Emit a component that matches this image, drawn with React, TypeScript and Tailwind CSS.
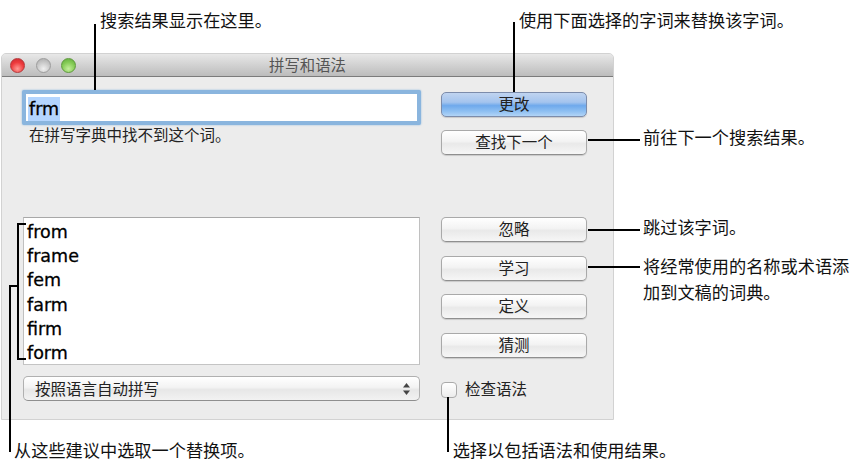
const suggestions = ['from', 'frame', 'fem', 'farm', 'firm', 'form'];

const buttonBase =
  'flex h-[25px] w-[146px] shrink-0 items-center justify-center rounded-[5px] border pb-px text-[15.5px] leading-none text-[#222] shadow-[0_1px_1px_rgba(0,0,0,0.15)]';

function Button({ label, primary = false }: { label: string; primary?: boolean }) {
  const skin = primary
    ? 'border-[#7c8cab] bg-[linear-gradient(#c0d4f0,#a4c4ee_40%,#6fa9ec_55%,#8fc0f2_80%,#b2d4f6)]'
    : 'border-[#a9a9a9] border-b-[#8f8f8f] bg-[linear-gradient(#ffffff,#f3f3f3_45%,#e9e9e9_55%,#f6f6f6)]';
  return <button className={`${buttonBase} ${skin}`}>{label}</button>;
}

function SideNote({ className = '', textClass = '-mt-[2px]', children }: { className?: string; textClass?: string; children: React.ReactNode }) {
  return (
    <div className={`flex items-start ${className}`}>
      <div className="z-10 -ml-[26px] mt-[13px] h-[2px] w-[52px] shrink-0 bg-black" />
      <div className={`ml-[3px] whitespace-nowrap text-[17.2px] leading-[26px] text-[#111] ${textClass}`}>{children}</div>
    </div>
  );
}

export default function App() {
  return (
    <div className="relative flex h-[468px] w-[860px] flex-col overflow-hidden bg-white font-['Noto_Sans_CJK_SC',sans-serif]">
      {/* top labels */}
      <div className="flex h-[53px] pt-[6px] text-[17.2px] leading-[27px] text-[#111]">
        <span className="ml-[100px]">搜索结果显示在这里。</span>
        <span className="ml-[247px]">使用下面选择的字词来替换该字词。</span>
      </div>

      <div className="flex">
        {/* window */}
        <div className="ml-px h-[367px] w-[613px] shrink-0 rounded-t-[5px] border border-[#d2d2d2] bg-[#ececec]">
          <div className="grid h-[23px] grid-cols-[1fr_auto_1fr] items-center rounded-t-[4px] border-b border-[#7b7b7b] bg-[linear-gradient(#e8e8e8,#d6d6d6_40%,#bcbcbc)]">
            <div className="flex gap-[10.5px] pl-[8px]">
              <span className="h-[15px] w-[15px] rounded-full border border-[#b5383a] bg-[radial-gradient(circle_at_50%_75%,#ff9a94,#ee3a3c_55%,#c92a30)]" />
              <span className="h-[15px] w-[15px] rounded-full border border-[#9d9d9d] bg-[radial-gradient(circle_at_50%_75%,#f0f0f0,#c8c8c8_55%,#a8a8a8)]" />
              <span className="h-[15px] w-[15px] rounded-full border border-[#5f9a3d] bg-[radial-gradient(circle_at_50%_75%,#c4ee9c,#84cb55_55%,#5fa83c)]" />
            </div>
            <span className="text-[15.4px] leading-none text-[#555]">拼写和语法</span>
          </div>

          <div className="flex pl-[21px] pt-[13px]">
            <div className="w-[397px]">
              <div className="-mx-px h-[35px] rounded-[2px] border-4 border-[#8ab5de] bg-white pl-[2px] pt-[2px] shadow-[0_0_2px_#8ab5de]">
                <span className="inline-block h-[24px] w-[32px] bg-[#b4d5fe] pl-[1px] font-['DejaVu_Sans',sans-serif] text-[17.5px] leading-[24px] text-black [-webkit-text-stroke:0.3px_black]">frm</span>
              </div>
              <p className="-mt-px h-[20px] pl-[6px] text-[15.5px] leading-[20px] text-[#222]">在拼写字典中找不到这个词。</p>

              <div className="relative mt-[73px] h-[148px] border border-[#a8a8a8] border-x-[#c0c0c0] border-b-[#c4c4c4] bg-white pl-[3px] pt-[2px] font-['DejaVu_Sans',sans-serif] text-[17.5px] text-black [-webkit-text-stroke:0.3px_black]">
                {/* bracket over the list */}
                <div className="absolute -left-[7px] top-[5px] h-[137px] w-[9px] border-y-2 border-l-2 border-black" />
                {suggestions.map(word => (
                  <div key={word} className="relative h-[24.2px] leading-[24.2px]">{word}</div>
                ))}
              </div>

              <div className="mt-[11px] flex h-[25px] items-center justify-between rounded-[5px] border border-[#b0b0b0] border-b-[#8f8f8f] bg-[linear-gradient(#ffffff,#f3f3f3_45%,#e7e7e7_55%,#f2f2f2)] pl-[11px] pr-[9px] text-[15.5px] leading-none text-[#222]">
                <span>按照语言自动拼写</span>
                <svg width="7" height="12" viewBox="0 0 7 12" className="fill-[#444]">
                  <path d="M3.5 0 L7 4.5 L0 4.5 Z" />
                  <path d="M0 7.5 L7 7.5 L3.5 12 Z" />
                </svg>
              </div>
            </div>

            <div className="ml-[21px] flex w-[146px] flex-col pt-[2px]">
              <div className="flex flex-col gap-[13px]">
                <Button label="更改" primary />
                <Button label="查找下一个" />
              </div>
              <div className="mt-[62px] flex flex-col gap-[13.5px]">
                <Button label="忽略" />
                <Button label="学习" />
                <Button label="定义" />
                <Button label="猜测" />
              </div>
              <label className="mt-[24px] flex h-[16px] items-center">
                <span className="h-[16px] w-[16px] rounded-[4px] border border-[#aaa] bg-[linear-gradient(#ffffff,#ececec)]" />
                <span className="ml-[8px] -translate-y-px text-[15.5px] leading-none text-[#222]">检查语法</span>
              </label>
            </div>
          </div>
        </div>

        {/* notes to the right of the window */}
        <div className="flex flex-col pt-[73px]">
          <SideNote>前往下一个搜索结果。</SideNote>
          <SideNote className="mt-[66px]">跳过该字词。</SideNote>
          <SideNote className="mt-[13px]" textClass="mt-0">
            将经常使用的名称或术语添
            <br />
            加到文稿的词典。
          </SideNote>
        </div>
      </div>

      {/* bottom labels */}
      <div className="flex pt-[16px] text-[17.2px] leading-[27px] text-[#111]">
        <span className="ml-[14px]">从这些建议中选取一个替换项。</span>
        <span className="ml-[198px]">选择以包括语法和使用结果。</span>
      </div>

      {/* leader lines that cross the window edge */}
      <div className="absolute left-[94px] top-[24px] h-[66px] w-[2px] bg-black" />
      <div className="absolute left-[513px] top-[22px] h-[70px] w-[2px] bg-black" />
      <div className="absolute left-[9px] top-[285px] h-[167px] w-[2px] bg-black" />
      <div className="absolute left-[9px] top-[285px] h-[2px] w-[9px] bg-black" />
      <div className="absolute left-[447px] top-[397px] h-[55px] w-[2px] bg-black" />
    </div>
  );
}
